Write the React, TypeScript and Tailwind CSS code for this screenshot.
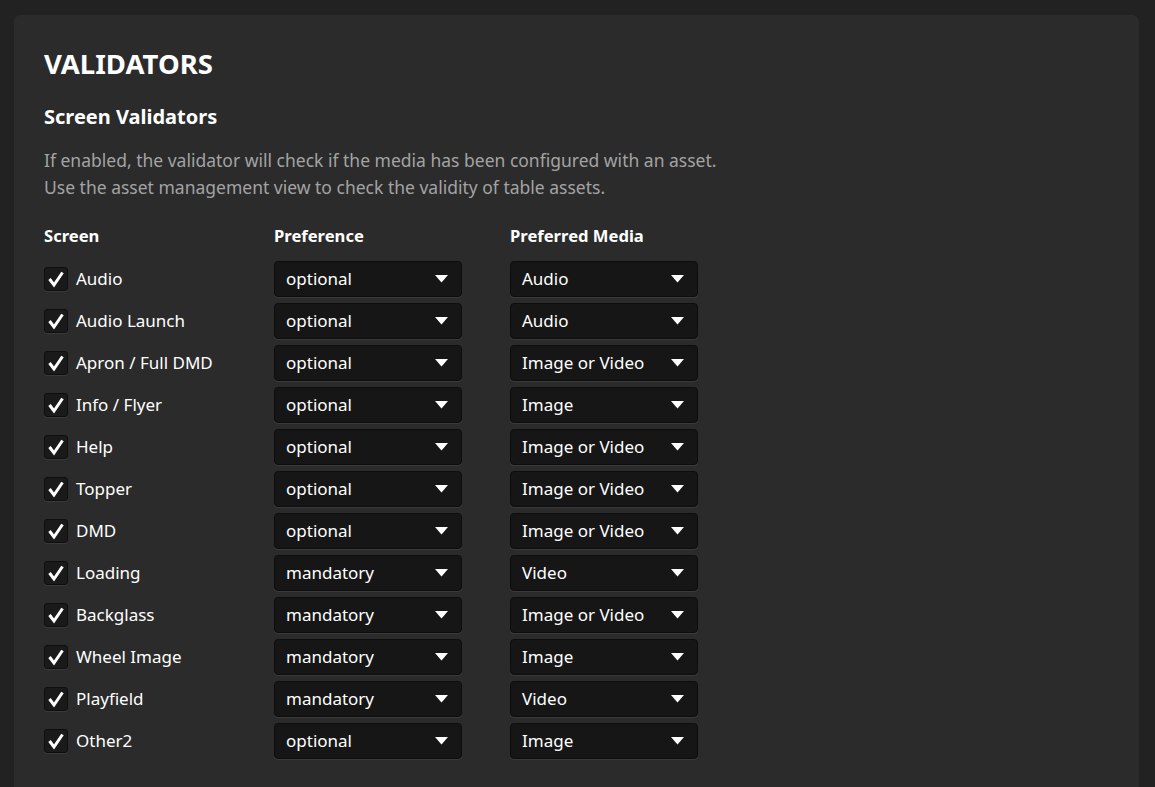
import React from "react";

const rows: [string, string, string][] = [
  ["Audio", "optional", "Audio"],
  ["Audio Launch", "optional", "Audio"],
  ["Apron / Full DMD", "optional", "Image or Video"],
  ["Info / Flyer", "optional", "Image"],
  ["Help", "optional", "Image or Video"],
  ["Topper", "optional", "Image or Video"],
  ["DMD", "optional", "Image or Video"],
  ["Loading", "mandatory", "Video"],
  ["Backglass", "mandatory", "Image or Video"],
  ["Wheel Image", "mandatory", "Image"],
  ["Playfield", "mandatory", "Video"],
  ["Other2", "optional", "Image"],
];

function Select({ value }: { value: string }) {
  return (
    <div className="w-[188px] h-[36px] rounded-[4px] border border-[#0d0d0d] bg-[#161616] shadow-[0_1px_0_#3a3a3a] flex items-center justify-between pl-[11px] pr-[13px] text-white text-[17px]">
      <span>{value}</span>
      <svg width="13" height="8" viewBox="0 0 13 8">
        <path d="M0 0 H13 L6.5 7.5 Z" fill="#ffffff" />
      </svg>
    </div>
  );
}

function Check() {
  return (
    <div className="w-[24px] h-[24px] rounded-[3px] border border-[#0e0e0e] bg-[#1a1a1a] shadow-[0_1px_0_#3a3a3a] flex items-center justify-center">
      <svg width="18" height="18" viewBox="0 0 18 18">
        <path d="M2.5 9 L7 15 L15.5 2.5" stroke="#ffffff" strokeWidth="3" fill="none" strokeLinejoin="miter" />
      </svg>
    </div>
  );
}

export default function App() {
  return (
    <div
      className="w-[1155px] h-[787px] bg-[#222222] overflow-hidden pt-[15px] pl-[14px] pr-[16px]"
      style={{ fontFamily: '"Noto Sans", "Open Sans", sans-serif' }}
    >
      <div className="h-[800px] rounded-[7px] bg-[#2b2b2b] pl-[30px] pt-[31px]">
        <h1 className="text-[27.5px] font-bold text-white leading-[36px]">VALIDATORS</h1>
        <h2 className="mt-[20px] text-[20px] font-bold text-white leading-[30px]">Screen Validators</h2>
        <div className="mt-[15px] text-[17.5px] text-[#a3a3a3] leading-[27px]">
          <p>If enabled, the validator will check if the media has been configured with an asset.</p>
          <p>Use the asset management view to check the validity of table assets.</p>
        </div>
        <div className="mt-[23px] flex text-[16.6px] font-bold text-white leading-[24px]">
          <div className="w-[230px]">Screen</div>
          <div className="w-[236px]">Preference</div>
          <div>Preferred Media</div>
        </div>
        <div className="mt-[13px] flex flex-col gap-[6px]">
          {rows.map(([name, pref, media]) => (
            <div key={name} className="flex items-center h-[36px]">
              <div className="w-[230px] flex items-center gap-[8px] text-[17px] text-white">
                <Check />
                <span>{name}</span>
              </div>
              <div className="w-[236px]">
                <Select value={pref} />
              </div>
              <Select value={media} />
            </div>
          ))}
        </div>
      </div>
    </div>
  );
}
